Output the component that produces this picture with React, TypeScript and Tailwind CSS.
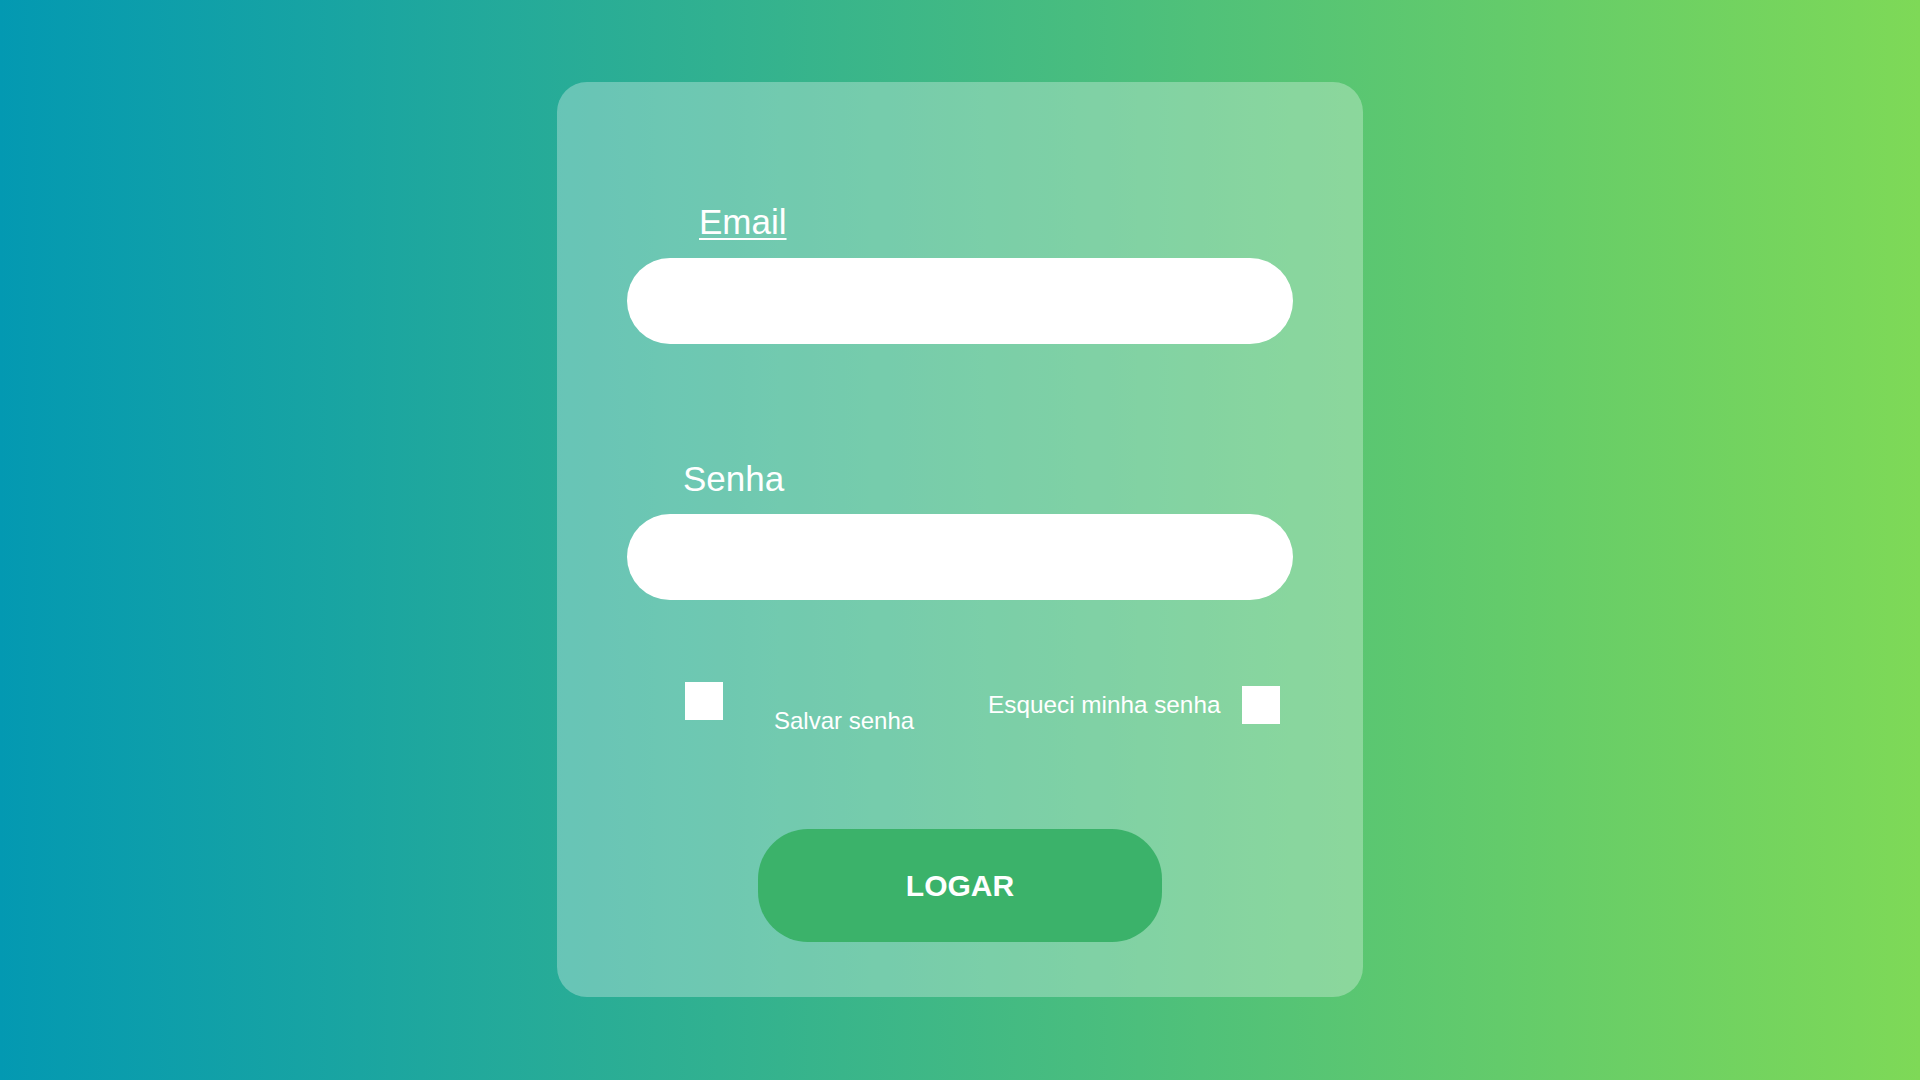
export default function App() {
  return (
    <div className="min-h-screen w-full flex items-start justify-center pt-[82px] bg-linear-to-r/srgb from-[#0399b2] to-[#7ed957] font-['Liberation_Sans',Arial,sans-serif] text-white">
      <div className="w-[806px] h-[915px] rounded-[30px] bg-white/[0.3] px-[70px] pt-[120px] flex flex-col">
        <label className="ml-[72px] text-[35px] leading-[40px] underline decoration-2 underline-offset-[4px] self-start">Email</label>
        <input type="text" className="mt-[16px] h-[86px] w-full rounded-full bg-white outline-none border-0 px-8 text-black text-2xl" />
        <label className="mt-[115px] ml-[56px] text-[35px] leading-[40px] self-start">Senha</label>
        <input type="password" className="mt-[15px] h-[86px] w-full rounded-full bg-white outline-none border-0 px-8 text-black text-2xl" />
        <div className="mt-[82px] flex items-start">
          <div className="ml-[58px] w-[38px] h-[38px] bg-white shrink-0" />
          <span className="ml-[51px] mt-[25px] text-[24px] leading-[28px] whitespace-nowrap">Salvar senha</span>
          <span className="ml-[74px] mt-[9px] text-[24.3px] leading-[28px] whitespace-nowrap">Esqueci minha senha</span>
          <div className="ml-[22px] mt-[4px] w-[38px] h-[38px] bg-white shrink-0" />
        </div>
        <button className="mt-[94px] self-center w-[404px] h-[113px] rounded-[50px] bg-[#3bb26a] text-white text-[30px] font-bold">LOGAR</button>
      </div>
    </div>
  );
}
